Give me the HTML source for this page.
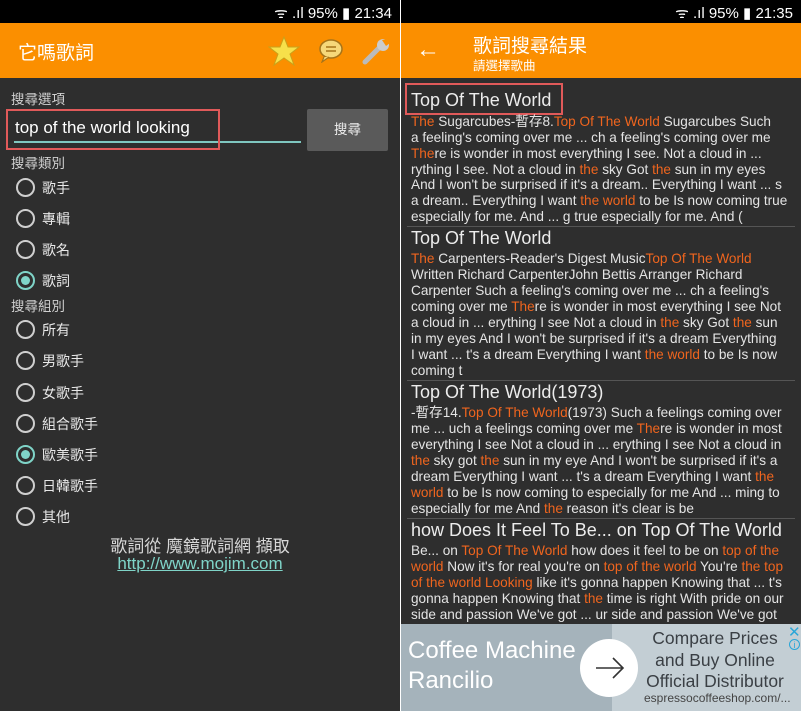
<!DOCTYPE html>
<html><head><meta charset="utf-8"><style>
*{margin:0;padding:0;box-sizing:border-box}
body{width:801px;height:711px;background:#fff;position:relative;overflow:hidden;font-family:"Liberation Sans","Noto Sans CJK TC",sans-serif}
.p{position:absolute;top:0;height:711px;background:#2e2e2e;overflow:hidden}
.sb{position:absolute;left:0;right:0;top:0;height:23px;background:#000;color:#fff;font-size:15px;text-align:right;padding:3px 8px 0 0}
.ab{position:absolute;left:0;right:0;top:23px;height:55px;background:#fb8f00}
.t{position:absolute;white-space:nowrap;color:#e6e6e6}
.r{position:absolute;left:16px;width:19px;height:19px;border:2px solid #cfcfcf;border-radius:50%}
.r.on{border-color:#7fd4c8}
.r.on::after{content:"";position:absolute;left:3px;top:3px;width:9px;height:9px;border-radius:50%;background:#7fd4c8}
.rl{position:absolute;left:42px;color:#e8e8e8;font-size:14px}
.lab{position:absolute;left:11px;color:#d0d0d0;font-size:13.5px}
.ln{position:absolute;left:411px;font-size:13.6px;color:#e4e4e4;white-space:nowrap;line-height:16px}
.ln b{font-weight:normal;color:#f0651e}
.tt{position:absolute;left:411px;font-size:18px;color:#ececec;white-space:nowrap}
</style></head><body>
<div class="p" style="left:0;width:400px">
<div class="sb">ᯤ .ıl 95% ▮ 21:34</div>
<div class="ab">
<div class="t" style="left:18px;top:15px;font-size:19px;color:#fff">它嗎歌詞</div>
<svg style="position:absolute;left:268px;top:13px" width="32" height="30" viewBox="0 0 32 30"><polygon points="16,1 20,11 31,11 22,18 26,29 16,22 6,29 10,18 1,11 12,11" fill="#f7e04a" stroke="#c9a11a" stroke-width="1"/></svg>
<svg style="position:absolute;left:318px;top:16px" width="26" height="24" viewBox="0 0 26 24"><ellipse cx="13" cy="10" rx="11" ry="9" fill="#f6d87a" stroke="#a6741a" stroke-width="1.5"/><path d="M6 18 L4 23 L11 18" fill="#f6d87a" stroke="#a6741a" stroke-width="1.2"/><path d="M8 8h10M8 12h10" stroke="#a6741a" stroke-width="1.5"/></svg>
<svg style="position:absolute;left:362px;top:14px" width="30" height="28" viewBox="0 0 30 28"><path d="M3 25 L17 11" stroke="#bbb" stroke-width="5" stroke-linecap="round"/><circle cx="21" cy="8" r="6" fill="#ccc"/><path d="M20 3 L25 2 L28 6 L24 9 Z" fill="#fb8f00"/></svg>
</div>
<div class="lab" style="top:88px">搜尋選項</div>
<div class="t" style="left:15px;top:118px;font-size:17px;color:#fff">top of the world looking</div>
<div style="position:absolute;left:14px;top:141px;width:287px;height:2px;background:#7fc7c0"></div>
<div style="position:absolute;left:6px;top:109px;width:214px;height:41px;border:2px solid #e05a5a"></div>
<div style="position:absolute;left:307px;top:109px;width:81px;height:42px;background:#5a5a5a;border-radius:2px;color:#eee;font-size:13.5px;text-align:center;line-height:42px">搜尋</div>
<div class="lab" style="top:152px">搜尋類別</div>
<div class="r" style="top:178px"></div><div class="rl" style="top:178px">歌手</div>
<div class="r" style="top:209px"></div><div class="rl" style="top:209px">專輯</div>
<div class="r" style="top:240px"></div><div class="rl" style="top:240px">歌名</div>
<div class="r on" style="top:271px"></div><div class="rl" style="top:271px">歌詞</div>
<div class="lab" style="top:295px">搜尋組別</div>
<div class="r" style="top:320px"></div><div class="rl" style="top:320px">所有</div>
<div class="r" style="top:351px"></div><div class="rl" style="top:351px">男歌手</div>
<div class="r" style="top:383px"></div><div class="rl" style="top:383px">女歌手</div>
<div class="r" style="top:414px"></div><div class="rl" style="top:414px">組合歌手</div>
<div class="r on" style="top:445px"></div><div class="rl" style="top:445px">歐美歌手</div>
<div class="r" style="top:476px"></div><div class="rl" style="top:476px">日韓歌手</div>
<div class="r" style="top:507px"></div><div class="rl" style="top:507px">其他</div>
<div class="t" style="left:0;width:400px;text-align:center;top:532px;font-size:17px;color:#d8d8d8">歌詞從 魔鏡歌詞網 擷取</div>
<div class="t" style="left:0;width:400px;text-align:center;top:554px;font-size:17px;color:#7fd4c8;text-decoration:underline">http://www.mojim.com</div>
</div>
<div class="p" style="left:401px;width:400px">
<div class="sb">ᯤ .ıl 95% ▮ 21:35</div>
<div class="ab">
<div class="t" style="left:15px;top:13px;font-size:24px;color:#fff">←</div>
<div class="t" style="left:72px;top:8px;font-size:19px;color:#fff">歌詞搜尋結果</div>
<div class="t" style="left:72px;top:32px;font-size:12.5px;color:#fff">請選擇歌曲</div>
</div>
</div>
<div style="position:absolute;left:405px;top:83px;width:158px;height:32px;border:2px solid #e05a5a"></div>
<div class="tt" style="top:90px">Top Of The World</div>
<div class="ln" style="top:114px"><b>The</b> Sugarcubes-暫存8.<b>Top Of The World</b> Sugarcubes Such</div>
<div class="ln" style="top:130px">a feeling's coming over me ... ch a feeling's coming over me</div>
<div class="ln" style="top:146px"><b>The</b>re is wonder in most everything I see. Not a cloud in ...</div>
<div class="ln" style="top:162px">rything I see. Not a cloud in <b>the</b> sky Got <b>the</b> sun in my eyes</div>
<div class="ln" style="top:177px">And I won't be surprised if it's a dream.. Everything I want ... s</div>
<div class="ln" style="top:193px">a dream.. Everything I want <b>the world</b> to be Is now coming true</div>
<div class="ln" style="top:209px">especially for me. And ... g true especially for me. And (</div>
<div style="position:absolute;left:407px;top:226px;width:388px;height:1px;background:#555"></div>
<div class="tt" style="top:228px">Top Of The World</div>
<div class="ln" style="top:251px"><b>The</b> Carpenters-Reader's Digest Music<b>Top Of The World</b></div>
<div class="ln" style="top:267px">Written Richard CarpenterJohn Bettis Arranger Richard</div>
<div class="ln" style="top:283px">Carpenter Such a feeling's coming over me ... ch a feeling's</div>
<div class="ln" style="top:299px">coming over me <b>The</b>re is wonder in most everything I see Not</div>
<div class="ln" style="top:315px">a cloud in ... erything I see Not a cloud in <b>the</b> sky Got <b>the</b> sun</div>
<div class="ln" style="top:331px">in my eyes And I won't be surprised if it's a dream Everything</div>
<div class="ln" style="top:347px">I want ... t's a dream Everything I want <b>the world</b> to be Is now</div>
<div class="ln" style="top:363px">coming t</div>
<div style="position:absolute;left:407px;top:380px;width:388px;height:1px;background:#555"></div>
<div class="tt" style="top:382px">Top Of The World(1973)</div>
<div class="ln" style="top:405px">-暫存14.<b>Top Of The World</b>(1973) Such a feelings coming over</div>
<div class="ln" style="top:421px">me ... uch a feelings coming over me <b>The</b>re is wonder in most</div>
<div class="ln" style="top:437px">everything I see Not a cloud in ... erything I see Not a cloud in</div>
<div class="ln" style="top:453px"><b>the</b> sky got <b>the</b> sun in my eye And I won't be surprised if it's a</div>
<div class="ln" style="top:469px">dream Everything I want ... t's a dream Everything I want <b>the</b></div>
<div class="ln" style="top:485px"><b>world</b> to be Is now coming to especially for me And ... ming to</div>
<div class="ln" style="top:501px">especially for me And <b>the</b> reason it's clear is be</div>
<div style="position:absolute;left:407px;top:518px;width:388px;height:1px;background:#555"></div>
<div class="tt" style="top:520px">how Does It Feel To Be... on Top Of The World</div>
<div class="ln" style="top:543px">Be... on <b>Top Of The World</b> how does it feel to be on <b>top of the</b></div>
<div class="ln" style="top:559px"><b>world</b> Now it's for real you're on <b>top of the world</b> You're <b>the top</b></div>
<div class="ln" style="top:575px"><b>of the world Looking</b> like it's gonna happen Knowing that ... t's</div>
<div class="ln" style="top:591px">gonna happen Knowing that <b>the</b> time is right With pride on our</div>
<div class="ln" style="top:607px">side and passion We've got ... ur side and passion We've got</div>
<div style="position:absolute;left:401px;top:624px;width:400px;height:87px;background:#a5b3bb"></div>
<div style="position:absolute;left:612px;top:624px;width:189px;height:87px;background:#c3ced4"></div>
<div class="t" style="left:408px;top:637px;font-size:24px;color:#fff">Coffee Machine</div>
<div class="t" style="left:408px;top:667px;font-size:24px;color:#fff">Rancilio</div>
<div style="position:absolute;left:580px;top:639px;width:58px;height:58px;border-radius:50%;background:#fff"></div>
<svg style="position:absolute;left:594px;top:656px" width="32" height="24" viewBox="0 0 32 24"><path d="M2 12H29M19 2L29 12L19 22" stroke="#333" stroke-width="1.6" fill="none"/></svg>
<div class="t" style="left:640px;top:628px;width:150px;text-align:center;font-size:17.5px;line-height:21.5px;color:#3a3f44">Compare Prices<br>and Buy Online<br>Official Distributor</div>
<div class="t" style="left:644px;top:691px;font-size:12px;color:#444">espressocoffeeshop.com/...</div>
<div class="t" style="left:788px;top:623px;font-size:15px;color:#2aa6d8">✕</div>
<div class="t" style="left:789px;top:639px;width:11px;height:11px;border:1px solid #2aa6d8;border-radius:50%;font-size:9px;color:#2aa6d8;text-align:center;line-height:10px">i</div>
</body></html>
